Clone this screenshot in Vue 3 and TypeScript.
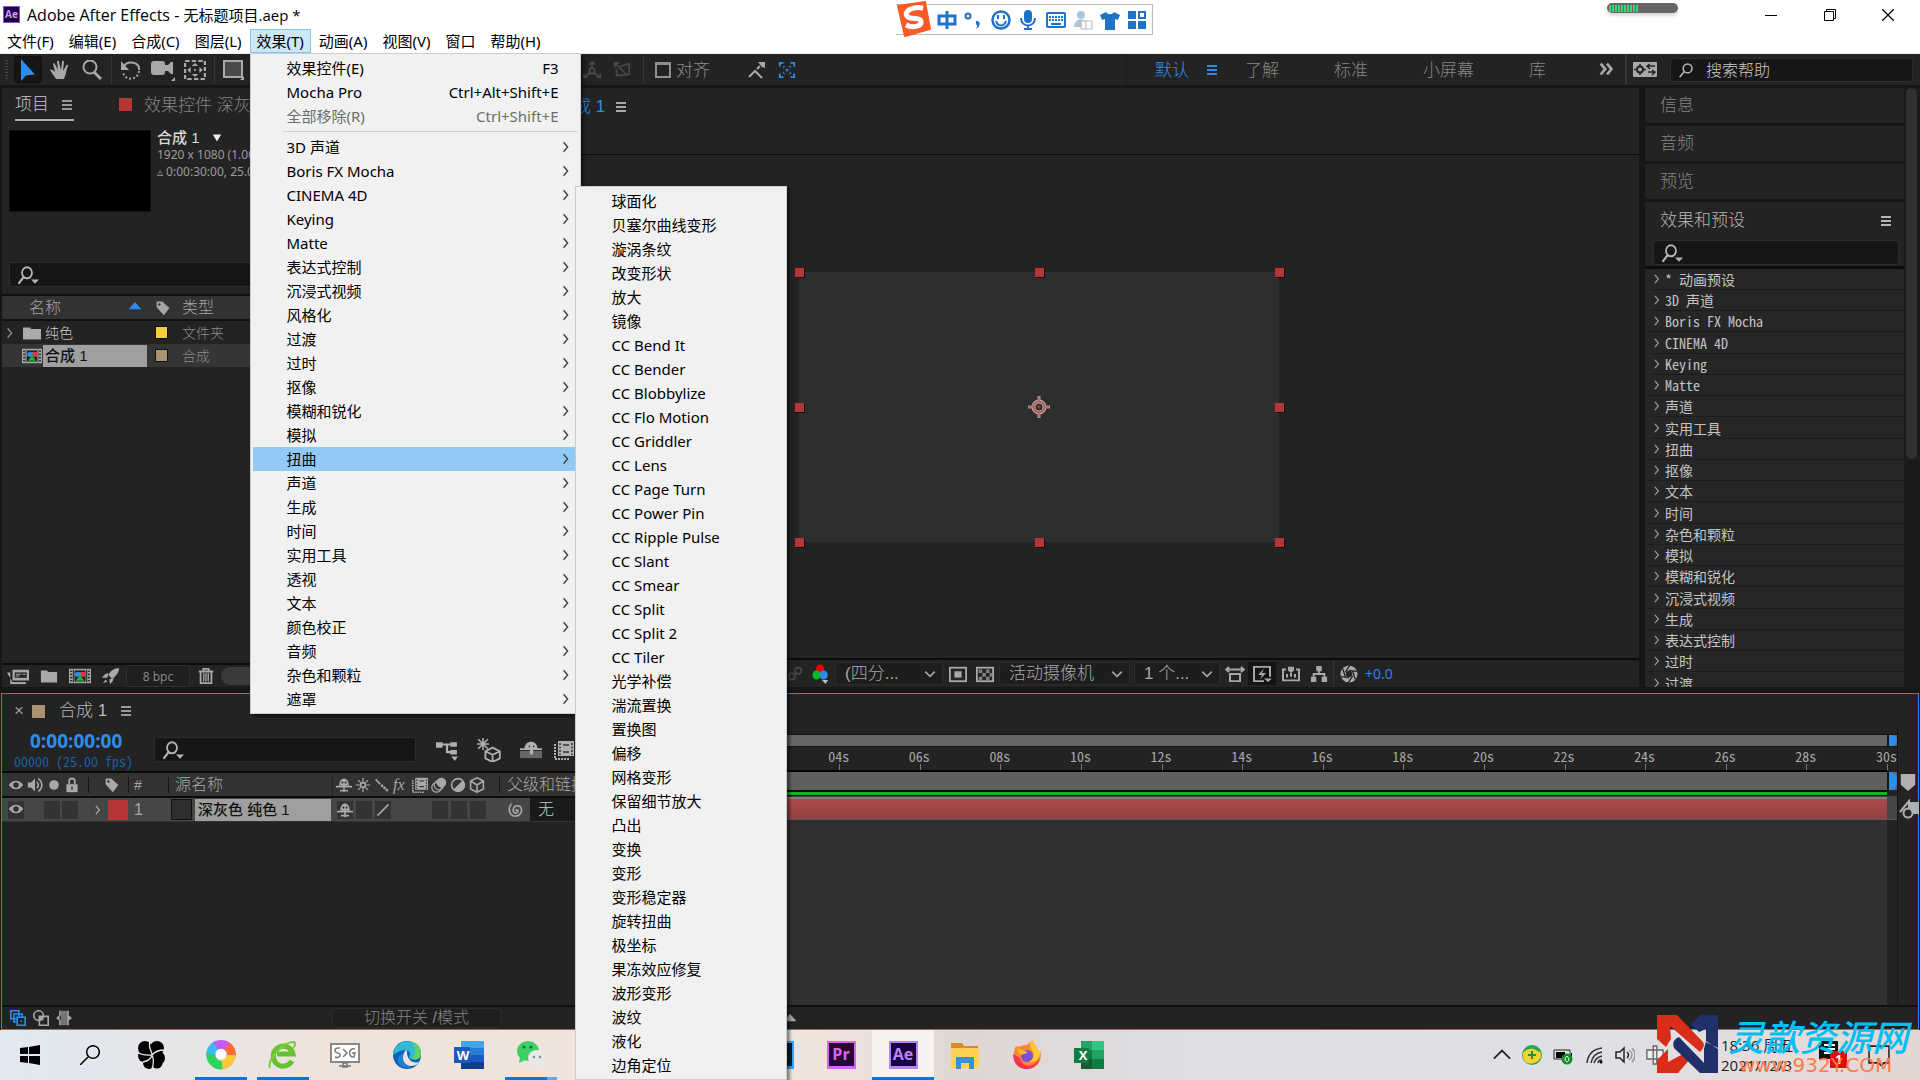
<script setup lang="ts">
import { h, ref } from 'vue'

const icons: Record<string, string> = {
  arrow: '<path d="M3 0v20l5-5 9-1z" fill="#2d8ceb"/>',
  hand: '<path d="M6 19C4 16 1 12 0 10c1-1 3 0 5 2L3 4c0-1 2-1 2 0l3 6-1-8c0-2 2-2 2 0l2 8 1-8c0-2 2-1 2 0l-1 9 3-5c1-2 3-1 2 0-2 4-2 9-4 13z" fill="currentColor"/>',
  zoom: '<circle cx="8" cy="7" r="6.5" fill="none" stroke="currentColor" stroke-width="2"/><path d="m12 12 7 7" stroke="currentColor" stroke-width="3"/>',
  rotate: '<path d="M3 6c4-6 16-4 15 4" fill="none" stroke="currentColor" stroke-width="2"/><path d="M18 11c-1 10-15 10-16 1" fill="none" stroke="currentColor" stroke-width="2" stroke-dasharray="2 2"/><path d="M0 1v9h8z" fill="currentColor"/>',
  camera: '<rect x="0" y="2" width="14" height="14" rx="3" fill="currentColor"/><path d="M13 6h4l3-3h2v12h-2l-3-3h-4zM20 22h4v-4z" fill="currentColor"/>',
  anchorTool: '<rect x="1" y="1" width="18" height="18" fill="none" stroke="currentColor" stroke-width="2" stroke-dasharray="4 2"/><path d="m10 3 3 3H7zM10 17l3-3H7zM3 10l3-3v6zM17 10l-3-3v6z" fill="currentColor"/><circle cx="10" cy="10" r="1" fill="currentColor"/>',
  rect: '<rect x="1" y="2" width="18" height="16" fill="#4a4a4a" stroke="currentColor" stroke-width="2"/><path d="M17 21h4v-4z" fill="currentColor"/>',
  axis: '<circle cx="10" cy="11" r="3" fill="none" stroke="currentColor" stroke-width="2"/><path d="M10 8V1M7 4l3-3 3 3M8 13l-7 5M1 14v4h4M12 13l7 5M19 14v4h-4" fill="none" stroke="currentColor" stroke-width="2"/>',
  axis2: '<path d="M2 2l14 14M2 7V2h5M8 6l10-3v12l-9 1H4V9" fill="none" stroke="currentColor" stroke-width="2"/>',
  snap: '<path d="M3 17l6-6 7 7M11 9l3-3" fill="none" stroke="currentColor" stroke-width="2"/><path d="M12 2h7v6l-3-1z" fill="currentColor"/>',
  snapBox: '<path d="M2 6V2h4M14 2h4v4M18 14v4h-4M6 18H2v-4" fill="none" stroke="currentColor" stroke-width="2"/><path d="M6 8V6h2m4 0h2v2m0 4v2h-2m-4 0H6v-2M9 9h2v2H9z" fill="none" stroke="currentColor"/>',
  lens: '<circle cx="12" cy="8" r="5.5" fill="none" stroke="currentColor" stroke-width="2"/><path d="m8 12-6 7" stroke="currentColor" stroke-width="2"/>',
  lensMenu: '<circle cx="10" cy="8" r="5" fill="none" stroke="currentColor" stroke-width="1.800"/><path d="m6.500 12-5 6" stroke="currentColor" stroke-width="2"/><path d="M14 14h8l-4 4z" fill="currentColor"/>',
  menu: '<path d="M0 5h10M0 9h10M0 13h10" stroke="currentColor" stroke-width="2" transform="translate(5 1)"/>',
  more: '<path d="m3 3 5 6-5 6M10 3l5 6-5 6" fill="none" stroke="currentColor" stroke-width="3"/>',
  panel: '<rect width="24" height="15" rx="1" fill="currentColor"/><circle cx="7" cy="7.500" r="3" fill="none" stroke="#232323" stroke-width="2"/><path d="M7 2v2M7 11v2M1 7.500h2M11 7.500h2M15 4h7M17 2l-3 2 3 3M15 10h7M19 8l3 2-3 3" fill="none" stroke="#232323" stroke-width="1.500"/>',
  tri: '<path d="M10 5 18 14H2z" fill="currentColor"/>',
  tridown: '<path d="M10 15 16 5H4z" fill="currentColor"/>',
  tag: '<path d="M2 2h7l9 8-7 9-9-10z" fill="currentColor"/><circle cx="5.500" cy="5.500" r="1.500" fill="#323232"/>',
  chev: '<path d="m7 4 5 6-5 6" fill="none" stroke="currentColor" stroke-width="1.800"/>',
  chevd: '<path d="m4 7 6 6 6-6" fill="none" stroke="currentColor" stroke-width="2"/>',
  folder: '<path d="M1 3h7l1 2h10v13H1z" fill="currentColor"/>',
  comp: '<path d="M0 1h20v18H0z" fill="currentColor"/><path d="M4 2v16M16 2v16" stroke="#333"/><path d="M1 4h2M1 8h2M1 12h2M1 16h2M17 4h2M17 8h2M17 12h2M17 16h2" stroke="#333" stroke-width="2"/><path d="M5 3h10v14H5z" fill="#222"/><path d="M9 5h6v6H9z" fill="#e33"/><circle cx="8" cy="8" r="3" fill="#38e"/><path d="m10 9 4 7H6z" fill="#1b3"/>',
  footage: '<path d="M5 3h15v12H5zM0 6h3v13h14v-2H5M1 6v13" fill="currentColor"/><path d="M7 6h11v6H7z" fill="#232323"/><path d="M8 8h5M8 10h3M14 8h3" stroke="currentColor"/><path d="M4 17h13v2H4z" fill="currentColor"/>',
  rocket: '<path d="M19 1c-6 0-10 4-12 8l4 4c4-2 8-7 8-12zM7 7c-3 0-5 2-7 5h6zM13 12c0 3-2 5-4 7l-1-5zM4 14l-3 4 5-2z" fill="currentColor"/>',
  trash: '<path d="M2 5h16M7 4V2h6v2M4 6v12h12V6" fill="none" stroke="currentColor" stroke-width="2"/><path d="M7.500 7v9M10 7v9M12.500 7v9" stroke="currentColor" stroke-width="1.500"/>',
  glass: '<circle cx="6" cy="13" r="4" fill="none" stroke="currentColor" stroke-width="2"/><circle cx="14" cy="6" r="4" fill="none" stroke="currentColor" stroke-width="2"/>',
  rgb: '<circle cx="9" cy="5" r="4.500" fill="#e00"/><circle cx="5" cy="11" r="4.500" fill="#0b2"/><circle cx="13" cy="11" r="4.500" fill="#2d8ceb"/><path d="M11 16h7l-3 4z" fill="#bbb"/>',
  mask: '<rect x="1" y="3" width="18" height="15" fill="none" stroke="currentColor" stroke-width="2"/><path d="M6 7h8v7H6z" fill="currentColor"/>',
  checker: '<rect x="1" y="3" width="18" height="15" fill="none" stroke="currentColor" stroke-width="2"/><path d="M3 5h4v4H3zM11 5h4v4h-4zM7 9h4v4H7zM15 9h3v4h-3zM3 13h4v4H3zM11 13h4v4h-4z" fill="currentColor" opacity=".7"/>',
  aspect: '<path d="M1 5h18M4 2 1 5l3 3M16 2l3 3-3 3M5 10h10v8H5z" fill="none" stroke="currentColor" stroke-width="2"/>',
  fast: '<path d="M12 18H2V2h16v11" fill="none" stroke="currentColor" stroke-width="2"/><path d="m12 4-6 7h4l-2 5 6-7h-4zM12 15h8l-4 4z" fill="currentColor"/>',
  ruler: '<path d="M5 5H2v12h16V5h-3M10 13V9M6 14v-4M14 14v-4" fill="none" stroke="currentColor" stroke-width="2"/><path d="M7 2h6v4l-3 3-3-3z" fill="currentColor"/>',
  flow: '<path d="M7 1h6v6H7zM1 13h6v6H1zM13 13h6v6h-6z" fill="currentColor"/><path d="M10 6v4M4 14v-4h12v4" fill="none" stroke="currentColor" stroke-width="2"/>',
  shutter: '<circle cx="10" cy="10" r="6.500" fill="none" stroke="currentColor" stroke-width="6"/><path d="m11 0-5 8M19 7l-9-1M17 16l-3-9M9 20l5-8M1 13l9 1M3 4l3 9" stroke="#232323" stroke-width="1.500"/>',
  eye: '<path d="M1 10c5-7 13-7 18 0-5 7-13 7-18 0z" fill="currentColor"/><circle cx="10" cy="10" r="3.500" fill="#323232"/>',
  speaker: '<path d="M1 7h4l5-5v16l-5-5H1z" fill="currentColor"/><path d="M12 6c3 2 3 6 0 8M14 2c6 4 6 12 0 16" fill="none" stroke="currentColor" stroke-width="2"/>',
  dot: '<circle cx="10" cy="10" r="6" fill="currentColor"/>',
  lock: '<path d="M6 9V5c0-4 8-4 8 0v4" fill="none" stroke="currentColor" stroke-width="2.500"/><path d="M2 9h16v10H2z" fill="currentColor"/><path d="M10 12v4" stroke="#323232" stroke-width="2"/>',
  shy: '<path d="M4 11c0-12 12-12 12 0z" fill="currentColor"/><path d="M0 12h20M10 9v10M5 17h10" stroke="currentColor" stroke-width="2"/><circle cx="8" cy="7" r="1.300" fill="#323232"/><circle cx="12" cy="7" r="1.300" fill="#323232"/>',
  sun: '<circle cx="10" cy="10" r="3" fill="none" stroke="currentColor" stroke-width="2"/><path d="M10 1v5M10 14v5M1 10h5M14 10h5M4 4l3 3M13 13l3 3M16 4l-3 3M7 13l-3 3" stroke="currentColor" stroke-width="1.500"/>',
  quality: '<path d="M2 3l6 6" stroke="currentColor" stroke-width="2"/><path d="m9 10 9 8" stroke="currentColor" stroke-width="3" stroke-dasharray="3 1"/>',
  slash: '<path d="M3 17 17 3" stroke="currentColor" stroke-width="2"/>',
  film: '<path d="M4 1h16v15H4z" fill="currentColor"/><path d="M1 4v15h15" fill="none" stroke="currentColor" stroke-width="2" stroke-dasharray="2 1"/><path d="M6 3v12M18 3v12" stroke="#323232" stroke-width="1.500" stroke-dasharray="2 1.500"/><path d="M9 5h6M9 12h6" stroke="#323232" stroke-width="1.500"/>',
  blur: '<circle cx="13" cy="7" r="6" fill="currentColor"/><circle cx="10" cy="10" r="6" fill="none" stroke="currentColor" stroke-width="1.500"/><circle cx="7" cy="13" r="6" fill="none" stroke="currentColor" stroke-width="1.500"/>',
  adjust: '<circle cx="10" cy="10" r="8" fill="none" stroke="currentColor" stroke-width="2"/><path d="M16 4A8 8 0 0 1 4 16z" fill="currentColor"/>',
  cube: '<path d="m10 1 8 4v10l-8 4-8-4V5zM2 5l8 5 8-5M10 10v9" fill="none" stroke="currentColor" stroke-width="2"/>',
  mini: '<path d="M0 3h6v5H0zM13 3h6v4h-6zM13 10h6v4h-6zM14 16h6l-3 4z" fill="currentColor"/><path d="M5 5h8M10 5v7h4" fill="none" stroke="currentColor" stroke-width="2"/>',
  draft: '<path d="m13 8 6 3v6l-6 3-6-3v-6zM7 11l6 3 6-3M13 14v6" fill="none" stroke="currentColor" stroke-width="1.500"/><path d="M5 0v10M0 5h10M1 1l8 8M9 1 1 9" stroke="currentColor" stroke-width="1.300"/>',
  shyBar: '<path d="M0 11h20v8H0z" fill="#666"/><path d="M4 9c0-11 12-11 12 0zM0 8h20v2H0zM9 8h3v7H9z" fill="currentColor"/><path d="M8 6h1M12 6h1" stroke="#222" stroke-width="2"/>',
  spiral: '<path d="M10 11c0-2 3-1 2 1-2 3-6 1-5-3 1-5 8-5 9 0 1 6-5 9-10 7C1 13 2 6 5 3" fill="none" stroke="currentColor" stroke-width="1.800"/>',
  layers: '<path d="M1 1h10v10H1zM5 5h10v10H5z" fill="none" stroke="currentColor" stroke-width="2"/><path d="M9 9h10v10H9z" fill="#232323" stroke="currentColor" stroke-width="2"/><path d="M13 13h2v2h-2z" fill="currentColor"/>',
  blend: '<circle cx="7" cy="7" r="6" fill="none" stroke="currentColor" stroke-width="2"/><path d="M8 8h11v11H8z" fill="none" stroke="currentColor" stroke-width="2"/><path d="M8 8h5v5H8z" fill="currentColor"/>',
  braces: '<path d="M6 1v5l-2 4 2 4v5H4v-6l-4-3 4-3V1zM14 1h2v6l4 3-4 3v6h-2z" fill="currentColor"/><path d="M6 1h8v18H6z" fill="currentColor" opacity=".6"/>',
  marker: '<path d="M2 1h16v12l-8 7-8-7z" fill="currentColor"/>',
  compBtn: '<path d="M10 3h10v12H10z" fill="currentColor"/><path d="M1 13 10 2v8" fill="none" stroke="currentColor" stroke-width="2"/><circle cx="9" cy="14" r="4.500" fill="#232323" stroke="currentColor" stroke-width="2"/>',
  anchor: '<path d="M11 0v7M11 15v7M0 11h7M15 11h7" stroke="#999" stroke-width="3"/><circle cx="11" cy="11" r="5.500" fill="none" stroke="#aaa" stroke-width="4"/><circle cx="11" cy="11" r="5.500" fill="none" stroke="#c44" stroke-width="1.500"/><path d="M11 1v5M11 16v5M1 11h5M16 11h5" stroke="#c44"/><circle cx="11" cy="11" r="1.500" fill="#a33"/>',
  sogou: '<path d="M2 5 29 1l5 27-25 7z" fill="#f95a28" stroke="#f95a28" stroke-width="2" stroke-linejoin="round"/><path d="M27 7C16 5 6 11 12 16c4 3 12 0 13 4 1 6-9 7-15 4" fill="none" stroke="#fff" stroke-width="5"/>',
  zhong: '<path d="M2 6h16v8H2zM10 1v18" fill="none" stroke="currentColor" stroke-width="3"/>',
  punct: '<circle cx="4" cy="6" r="2.500" fill="none" stroke="currentColor" stroke-width="2"/><path d="M12 11c5-1 5 5 0 8 2-3 1-4 0-5z" fill="currentColor"/>',
  smile: '<circle cx="10" cy="10" r="8.500" fill="none" stroke="currentColor" stroke-width="2.500"/><path d="M7 5v4M13 5v4" stroke="currentColor" stroke-width="2"/><path d="M5 11c2 6 8 6 10 0" fill="none" stroke="currentColor" stroke-width="2"/>',
  mic: '<rect x="6" y="0" width="8" height="13" rx="4" fill="currentColor"/><path d="M3 8c0 10 14 10 14 0M10 15v4M6 19h8" fill="none" stroke="currentColor" stroke-width="2"/>',
  keyboard: '<rect x="1" y="3" width="18" height="14" rx="1" fill="none" stroke="currentColor" stroke-width="2"/><path d="M3 7h14M3 10h14" stroke="currentColor" stroke-width="2" stroke-dasharray="2 1"/><path d="M5 14h10" stroke="currentColor" stroke-width="2"/>',
  person: '<circle cx="8" cy="5" r="4" fill="#adc4d8"/><path d="M1 17c0-10 13-10 13 0z" fill="#adc4d8"/><path d="M8 11h11v8H8zM13 11v8" fill="#fff" stroke="#b5b5b5"/>',
  shirt: '<path d="m6 2-6 3 2 5 3-1v11h10V9l3 1 2-5-6-3c-2 3-6 3-8 0z" fill="currentColor"/>',
  grid: '<path d="M1 1h8v8H1zM1 11h8v8H1zM11 11h8v8h-8z" fill="currentColor"/><path d="M12 2h6v6h-6z" fill="none" stroke="currentColor" stroke-width="2"/>',
  win: '<path d="m0 3 8-1v7H0zM9 2l11-2v9H9zM0 11h8v7l-8-1zM9 11h11v9L9 18z" fill="#000"/>',
  wsearch: '<circle cx="13" cy="7" r="6.300" fill="none" stroke="#000" stroke-width="1.500"/><path d="m8 12-8 8" stroke="#000" stroke-width="1.500"/>',
  petals: '<g fill="#000"><circle cx="8" cy="7" r="7"/><circle cx="20" cy="7" r="7"/><circle cx="7" cy="15" r="6"/><circle cx="21" cy="17" r="7"/><circle cx="12" cy="22" r="6"/><circle cx="20" cy="22" r="5.500"/><path d="M8 8h12v12H8z"/></g><path d="M13 0c-2 6 1 9 2 13M0 11c6 4 9 3 15 3M28 9c-6 0-10 1-13 5M15 14c-1 4-4 6-9 7M15 14c2 4 2 8 0 14" fill="none" stroke="#e8e6ea" stroke-width="1.300"/>',
  wheel: '<g fill="none" stroke-width="9"><path d="M5 16A10 10 0 0 1 11 5" stroke="#41b5f5"/><path d="M10 6A10 10 0 0 1 22 7" stroke="#c05af0"/><path d="M21 6A10 10 0 0 1 25 17" stroke="#fb6a3c"/><path d="M25 15A10 10 0 0 1 15 25" stroke="#fcc838"/><path d="M16 25A10 10 0 0 1 5 14" stroke="#2dd35b"/></g><circle cx="15" cy="14" r="5" fill="#fff"/>',
  ie: '<path d="M24 21A10 10 0 1 1 25 14H9" fill="none" stroke="#66c22e" stroke-width="5"/><path d="M2 28C-1 20 14 2 26 2c2 1 1 4-1 6" fill="none" stroke="#78cf3e" stroke-width="2"/>',
  sg: '<path d="M1 4h28v18H1z" fill="#fff" stroke="#888" stroke-width="2"/><path d="M10 8c-7-1-6 5-2 5 4 1 2 6-3 4M13 9l4 4-4 4M25 9c-7-2-7 9-1 8l1-4h-3M13 23h4v4h-4zM9 26h12" fill="none" stroke="#777" stroke-width="1.500"/>',
  edge: '<circle cx="15" cy="15" r="14" fill="#0b62b8"/><path d="M1 15C2-3 29-3 29 13c0 8-10 8-12 4 4-5-3-12-16-2z" fill="#32b9d4"/><path d="M19 2c7 2 10 7 10 11 0 7-6 7-10 6 6-4 5-13 0-17z" fill="#62d35c"/><path d="M15 10c-8 4-6 15 4 16 3 0 6-1 8-4-6 2-13-2-12-12z" fill="#efe3dc"/><path d="M13 12c-5 6 0 15 8 15-8 4-19-3-14-11z" fill="#1b82d4"/>',
  word: '<path d="M7 1h23v28H7z" fill="#185abd"/><path d="M7 1h23v7H7z" fill="#41a5ee"/><path d="M7 8h23v7H7z" fill="#2b7cd3"/><path d="M7 22h23v7H7z" fill="#103f91"/><rect x="0" y="7" width="16" height="16" fill="#185abd"/>',
  wechat: '<ellipse cx="12" cy="11" rx="11" ry="10" fill="#3fcf68"/><path d="m4 17-1 6 6-3z" fill="#3fcf68"/><ellipse cx="21" cy="18" rx="9" ry="8" fill="#e9e9e9"/><path d="m24 24 4 4v-6z" fill="#e9e9e9"/><g fill="#1d6b35"><circle cx="8" cy="7" r="1.500"/><circle cx="15" cy="7" r="1.500"/></g><g fill="#888"><circle cx="18" cy="17" r="1.200"/><circle cx="24" cy="17" r="1.200"/></g>',
  explorer: '<path d="M1 3h11l2 3h14v22H1z" fill="#d98b2b"/><path d="M1 8h28v20H1z" fill="#fcd253"/><path d="M6 29V17h18v12h-5v-6h-8v6z" fill="#3b8fd9"/>',
  firefox: '<path d="M4 6C0 13 0 29 15 29c11 0 16-10 13-18-3 0-3-5-8-11-2 3-4 4-6 5C8 5 8 8 4 6z" fill="#fb8a2e"/><path d="M1 14c0 19 23 20 27 4-6 10-18 10-20 0z" fill="#f5335a"/><circle cx="15" cy="16" r="6" fill="#7b4fd8"/><path d="M20 0c-4 4-1 9 1 12 2 5-1 8-4 10 8 0 12-5 11-11-3 0-4-6-8-11z" fill="#fdc934"/><path d="M5 8c4 2 8 2 11 5-3 0-5 2-8 2z" fill="#fdb52e"/>',
  excel: '<path d="M7 1h23v28H7z" fill="#21a366"/><path d="M18 1h12v9H18z" fill="#33c481"/><path d="M7 10h11v9H7z" fill="#107c41"/><path d="M7 19h23v10H7z" fill="#185c37"/><path d="M18 19h12v10H18z" fill="#107c41"/><rect x="0" y="8" width="15" height="15" fill="#107c41"/>',
  up: '<path d="m1 14 9-9 9 9" fill="none" stroke="#222" stroke-width="2"/>',
  guard: '<circle cx="10" cy="10" r="10" fill="#2fa350"/><path d="M1 8c3-4 10-6 14-2 4 0 4 3 4 6-2 5-10 9-15 5-3-2-3-5-3-9z" fill="#f9d32f"/><path d="M10 6v8M6 10h8" stroke="#1e8b42" stroke-width="2"/>',
  battery: '<path d="M1 5h16v9H1z" fill="none" stroke="#222"/><path d="M3 7h9v6H3zM18 8h1v4h-1z" fill="#000"/><circle cx="14" cy="14" r="5.500" fill="#0d9020"/><path d="M14 11c-3 3-2 5 0 6 2-1 3-3 0-6z" fill="none" stroke="#fff"/>',
  wifi: '<g fill="none" stroke="#333" stroke-width="1.500"><path d="M3 18C4 9 10 4 18 3M7 18c1-6 5-10 11-11M10 18c1-4 4-6 8-7M14 18c0-2 2-3 4-3"/></g><circle cx="17" cy="17" r="1.500"/>',
  sound: '<path d="M1 7h4l4-4v14l-4-4H1zM12 7c2 2 2 4 0 6" fill="none" stroke="#222" stroke-width="1.500"/><path d="M14 5c4 3 4 7 0 10M17 3c4 4 4 10 0 14" fill="none" stroke="#999" stroke-width="1.500"/>',
  zhongTray: '<path d="M1 5h18v9H1zM8 1h4v18H8z" fill="#eee" stroke="#666" stroke-width="1.500"/>',
  news: '<path d="M2 0h17v18H2zM0 4h2v14H0z" fill="#111"/><path d="M5 4h11M5 8h11M5 12h6" stroke="#fff" stroke-width="2"/><path d="M11 10h17v17H11z" fill="#e60b0b"/>',
  bubble: '<path d="M1 2h19v16h-5l-2 3-3-3H1z" fill="none" stroke="#222" stroke-width="1.500"/>',
  brand: '<path d="M0 0h20l25 26c4 4 1 8-2 11L13 11l1 13-5 8L0 24zM0 58V45l11-11v13L28 38l6 5-13 15z" fill="#d92d1a"/><path d="M61 0H43l-9 9 8 8 7-3v13l12 6zM61 58H43L17 33c-2-5 0-9 5-11l25 26V34l2-8 12 8z" fill="#20306b"/>',
}

interface IcoProps { n: string; w?: number; t?: number; box?: string }
const Ico = (p: IcoProps) =>
  h('svg', {
    width: p.w ?? 18,
    height: p.t ?? p.w ?? 18,
    viewBox: p.box ?? '0 0 20 20',
    preserveAspectRatio: 'none',
    'aria-hidden': 'true',
    innerHTML: icons[p.n],
  })

const menus = ['文件(F)', '编辑(E)', '合成(C)', '图层(L)', '效果(T)', '动画(A)', '视图(V)', '窗口', '帮助(H)']
const commands = [
  { name: '效果控件(E)', key: 'F3', off: false },
  { name: 'Mocha Pro', key: 'Ctrl+Alt+Shift+E', off: false },
  { name: '全部移除(R)', key: 'Ctrl+Shift+E', off: true },
]
const groups = ['3D 声道', 'Boris FX Mocha', 'CINEMA 4D', 'Keying', 'Matte', '表达式控制', '沉浸式视频', '风格化', '过渡', '过时', '抠像', '模糊和锐化', '模拟', '扭曲', '声道', '生成', '时间', '实用工具', '透视', '文本', '颜色校正', '音频', '杂色和颗粒', '遮罩']
const distort = ['球面化', '贝塞尔曲线变形', '漩涡条纹', '改变形状', '放大', '镜像', 'CC Bend It', 'CC Bender', 'CC Blobbylize', 'CC Flo Motion', 'CC Griddler', 'CC Lens', 'CC Page Turn', 'CC Power Pin', 'CC Ripple Pulse', 'CC Slant', 'CC Smear', 'CC Split', 'CC Split 2', 'CC Tiler', '光学补偿', '湍流置换', '置换图', '偏移', '网格变形', '保留细节放大', '凸出', '变换', '变形', '变形稳定器', '旋转扭曲', '极坐标', '果冻效应修复', '波形变形', '波纹', '液化', '边角定位']
const presets = ['* 动画预设', '3D 声道', 'Boris FX Mocha', 'CINEMA 4D', 'Keying', 'Matte', '声道', '实用工具', '扭曲', '抠像', '文本', '时间', '杂色和颗粒', '模拟', '模糊和锐化', '沉浸式视频', '生成', '表达式控制', '过时', '过渡']
const openMenu = ref('效果(T)')
const openGroup = ref('扭曲')
const seconds = Array.from({ length: 16 }, (_, i) => String(i * 2).padStart(2, '0') + 's')
const ime = ['zhong', 'punct', 'smile', 'mic', 'keyboard', 'person', 'shirt', 'grid']
const switches = ['shy', 'sun', 'quality', 'fx', 'film', 'blur', 'adjust', 'cube']
const apps = [
  { n: 'wheel', state: 'run' }, { n: 'ie', state: 'run' }, { n: 'sg', state: '' }, { n: 'edge', state: '' },
  { n: 'word', state: '', t: 'W' }, { n: 'wechat', state: 'run multi' },
]
const apps2 = [
  { n: 'ps', state: '', t: 'Ps' }, { n: 'pr', state: '', t: 'Pr' }, { n: 'ae', state: 'run active', t: 'Ae' },
  { n: 'explorer', state: '' }, { n: 'firefox', state: '' }, { n: 'excel', state: '', t: 'X' },
]
</script>

<template>
  <div class="desktop">
    <header class="titlebar">
      <span class="ae-mini">Ae</span>
      <h1>Adobe After Effects - <span>无标题项目.aep *</span></h1>
      <div class="ime">
        <Ico class="sogou" n="sogou" :w="36" :t="36" box="0 0 36 36" />
        <Ico v-for="i in ime" :key="i" :n="i" :w="20" />
      </div>
      <div class="win-ctl">
        <span class="capsule"><i></i></span>
        <button aria-label="最小化"><svg width="12" height="12"><path d="M0 6.500h12" stroke="#000" /></svg></button>
        <button aria-label="还原"><svg width="12" height="12"><path d="M.5 2.500h9v9h-9zM2.500 2V.5h9v9H10" fill="none" stroke="#000" /></svg></button>
        <button aria-label="关闭"><svg width="12" height="12"><path d="m0 0 12 12M12 0 0 12" stroke="#000" stroke-width="1.300" /></svg></button>
      </div>
    </header>

    <nav class="menubar">
      <div v-for="m in menus" :key="m" class="menu-slot">
        <button class="menu-btn" :class="{ open: m === openMenu }" @click="openMenu = m">{{ m }}</button>
        <div v-if="m === '效果(T)' && openMenu === m" class="menu effects">
          <button v-for="c in commands" :key="c.name" class="mi" :disabled="c.off"><span>{{ c.name }}</span><kbd>{{ c.key }}</kbd></button>
          <hr />
          <button v-for="g in groups" :key="g" class="mi" :class="{ on: g === openGroup }" @click="openGroup = g">
            <span>{{ g }}</span><Ico class="sub-ar" n="chev" :w="16" />
          </button>
          <div v-if="openGroup === '扭曲'" class="menu distort">
            <button v-for="d in distort" :key="d" class="mi">{{ d }}</button>
          </div>
        </div>
      </div>
    </nav>

    <div class="toolbar">
      <span class="grip"></span>
      <button class="tool sel" aria-label="选取"><Ico n="arrow" :w="20" :t="22" /></button>
      <button class="tool" aria-label="手形"><Ico n="hand" :w="20" /></button>
      <button class="tool" aria-label="缩放"><Ico n="zoom" :w="20" /></button>
      <i class="vsep"></i>
      <button class="tool" aria-label="旋转"><Ico n="rotate" :w="20" /></button>
      <button class="tool" aria-label="摄像机"><Ico n="camera" :w="24" :t="22" box="0 0 24 22" /></button>
      <button class="tool" aria-label="锚点"><Ico n="anchorTool" :w="22" :t="20" /></button>
      <i class="vsep"></i>
      <button class="tool" aria-label="矩形"><Ico n="rect" :w="22" :t="22" box="0 0 22 22" /></button>
      <div class="tools2">
        <Ico class="faint" n="axis" :w="18" /><Ico class="faint" n="axis2" :w="18" />
        <i class="vsep"></i>
        <label class="snap"><input type="checkbox" /><span>对齐</span></label>
        <Ico n="snap" :w="20" /><Ico class="blue" n="snapBox" :w="18" />
      </div>
      <div class="spaces">
        <button class="ws blue">默认</button>
        <Ico class="blue ws-menu" n="menu" :w="20" />
        <button class="ws">了解</button><button class="ws">标准</button><button class="ws">小屏幕</button><button class="ws">库</button>
        <Ico class="ws-more" n="more" :w="18" />
        <i class="vsep tall"></i>
        <Ico n="panel" :w="24" :t="15" box="0 0 24 15" />
        <label class="field help"><Ico n="lens" :w="16" /><input type="text" placeholder="搜索帮助" aria-label="搜索帮助" /></label>
      </div>
    </div>

    <main class="work">
      <div class="upper">
        <section class="panel project">
          <div class="tabs">
            <span class="tab cur">项目 <Ico n="menu" :w="20" /></span>
            <span class="chip red"></span><span class="tab">效果控件 深灰色</span>
          </div>
          <div class="info">
            <div class="thumb"></div>
            <div>
              <p class="nm">合成 1 <Ico class="white" n="tridown" :w="14" /></p>
              <p class="meta">1920 x 1080 (1.00)</p>
              <p class="meta">▵ 0:00:30:00, 25.00 fps</p>
            </div>
          </div>
          <label class="field find"><Ico n="lensMenu" :w="22" box="0 0 22 20" /><input type="text" aria-label="搜索项目" /></label>
          <table class="items">
            <thead>
              <tr><th class="c1"><span>名称</span><Ico class="blue" n="tri" :w="16" /></th><th class="c2"><Ico n="tag" :w="16" /></th><th>类型</th></tr>
            </thead>
            <tbody>
              <tr>
                <td class="c1"><Ico class="tw" n="chev" :w="16" /><Ico class="kind" n="folder" :w="20" :t="16" /><span class="lbl">纯色</span></td>
                <td class="c2"><i class="sw yellow"></i></td><td>文件夹</td>
              </tr>
              <tr class="on">
                <td class="c1"><i class="tw"></i><Ico class="kind" n="comp" :w="20" :t="16" /><span class="lbl hot">合成 1</span></td>
                <td class="c2"><i class="sw tan"></i></td><td>合成</td>
              </tr>
            </tbody>
          </table>
          <div class="foot pfoot">
            <span><Ico n="footage" :w="22" :t="18" /></span><span><Ico n="folder" :w="18" :t="16" /></span><span><Ico n="comp" :w="22" :t="16" /></span><span><Ico n="rocket" :w="18" /></span>
            <button class="bpc">8 bpc</button><Ico n="trash" :w="18" /><i class="hscroll"></i>
          </div>
        </section>

        <section class="panel viewer">
          <div class="vtab"><span class="blue">合成 1</span><Ico n="menu" :w="20" /></div>
          <div class="stage">
            <div class="canvas">
              <i v-for="k in 9" :key="k" :class="k === 5 ? 'mid' : 'hd'"><Ico v-if="k === 5" n="anchor" :w="22" box="0 0 22 22" /></i>
            </div>
          </div>
          <div class="foot vfoot">
            <Ico class="faint" n="glass" :w="16" />
            <Ico n="rgb" :w="18" :t="20" />
            <span class="pick w1"><select aria-label="分辨率"><option>(四分...</option></select><Ico n="chevd" :w="16" /></span>
            <Ico n="mask" :w="18" /><Ico n="checker" :w="18" />
            <span class="pick w2"><select aria-label="视图"><option>活动摄像机</option></select><Ico n="chevd" :w="16" /></span>
            <span class="pick w3"><select aria-label="布局"><option>1 个...</option></select><Ico n="chevd" :w="16" /></span>
            <Ico n="aspect" :w="20" :t="18" /><span class="pressed"><Ico n="fast" :w="20" :t="18" /></span><Ico n="ruler" :w="20" :t="18" /><Ico n="flow" :w="18" />
            <i class="vsep"></i><Ico n="shutter" :w="18" /><span class="blue exp">+0.0</span>
          </div>
        </section>

        <aside class="side">
          <div class="stack">
            <h2>信息</h2><h2>音频</h2><h2>预览</h2>
            <section class="fx">
              <h2 class="lit">效果和预设 <Ico n="menu" :w="20" /></h2>
              <label class="field fxfind"><Ico n="lensMenu" :w="22" box="0 0 22 20" /><input type="text" aria-label="搜索效果" /></label>
              <ul><li v-for="p in presets" :key="p"><Ico n="chev" :w="14" />{{ p }}</li></ul>
            </section>
          </div>
          <div class="vscroll"><i></i></div>
        </aside>
      </div>

      <section class="timeline">
        <div class="ttab"><button aria-label="关闭合成">×</button><span class="chip tan"></span><span>合成 1</span><Ico n="menu" :w="20" /></div>
        <div class="tbody">
          <div class="tleft">
            <div class="tctl">
              <div class="tc"><b>0:00:00:00</b><small>00000 (25.00 fps)</small></div>
              <label class="field tfind"><Ico n="lensMenu" :w="22" box="0 0 22 20" /><input type="text" aria-label="搜索图层" /></label>
              <Ico n="mini" :w="22" /><Ico n="draft" :w="24" :t="24" /><Ico n="shyBar" :w="22" :t="18" /><Ico n="film" :w="20" />
            </div>
            <div class="thead">
              <div class="av"><Ico n="eye" :w="16" /><Ico n="speaker" :w="16" /><Ico n="dot" :w="16" /><Ico n="lock" :w="14" :t="16" /></div>
              <div class="lab"><Ico n="tag" :w="16" /></div>
              <div class="no">#</div>
              <div class="src">源名称</div>
              <div class="sws"><template v-for="s in switches" :key="s"><em v-if="s === 'fx'">fx</em><Ico v-else :n="s" :w="16" /></template></div>
              <div class="par">父级和链接</div>
            </div>
            <div class="layer">
              <div class="av"><i class="cell"><Ico n="eye" :w="16" /></i><i></i><i class="cell"></i><i class="cell"></i></div>
              <div class="lab"><Ico n="chev" :w="14" /><i class="col"></i></div>
              <div class="no">1</div>
              <div class="src"><i class="solid"></i><span class="hot">深灰色 纯色 1</span></div>
              <div class="sws"><i class="cell"><Ico n="shy" :w="16" /></i><i class="cell"></i><i class="cell"><Ico n="slash" :w="16" /></i><i></i><i></i><i class="cell"></i><i class="cell"></i><i class="cell"></i></div>
              <div class="par"><Ico n="spiral" :w="18" /><span class="none">无</span></div>
            </div>
          </div>
          <div class="tright">
            <div class="nav"><i></i></div>
            <div class="ruler"><span v-for="s in seconds" :key="s"><b>{{ s }}</b></span></div>
            <div class="area"><i></i></div>
            <div class="cache"></div>
            <div class="lrow"><div class="bar"></div></div>
            <div class="rest"></div>
          </div>
          <div class="tend"><Ico n="marker" :w="18" /><Ico n="compBtn" :w="20" /></div>
        </div>
        <div class="tfoot">
          <Ico class="blue" n="layers" :w="16" /><Ico n="blend" :w="16" /><Ico n="braces" :w="16" />
          <button class="toggle">切换开关 /模式</button>
          <Ico class="zoomtri" n="tri" :w="16" />
        </div>
      </section>
    </main>

    <footer class="taskbar">
      <button class="start" aria-label="开始"><Ico n="win" :w="20" /></button>
      <button class="start" aria-label="搜索"><Ico n="wsearch" :w="20" /></button>
      <button class="app first" aria-label="助手"><Ico n="petals" :w="28" box="0 0 28 28" /></button>
      <button v-for="a in apps" :key="a.n" class="app" :class="a.state" :aria-label="a.n"><Ico :n="a.n" :w="30" box="0 0 30 30" /><b v-if="a.t" class="off">{{ a.t }}</b></button>
      <div class="apps2">
        <button v-for="a in apps2" :key="a.n" class="app" :class="a.state" :aria-label="a.n">
          <span v-if="['ps', 'pr', 'ae'].includes(a.n)" class="adobe" :class="a.n">{{ a.t }}</span>
          <template v-else><Ico :n="a.n" :w="30" box="0 0 30 30" /><b v-if="a.t" class="off">{{ a.t }}</b></template>
        </button>
      </div>
      <div class="tray">
        <Ico n="up" :w="18" /><Ico n="guard" :w="20" /><Ico n="battery" :w="20" /><Ico n="wifi" :w="20" /><Ico n="sound" :w="20" /><Ico n="zhongTray" :w="18" :t="20" />
        <div class="clock"><span>18:36 周五</span><span>2021/12/3</span></div>
        <span class="news"><Ico n="news" :w="28" box="0 0 28 28" /><b>1</b></span>
        <Ico n="bubble" :w="22" box="0 0 21 21" />
      </div>
    </footer>

    <div class="mark">
      <Ico n="brand" :w="61" :t="58" box="0 0 61 58" />
      <div><strong>灵歆资源网</strong><span>www.932Y.COM</span></div>
    </div>
  </div>
</template>

<style>
body { margin: 0; background: #161616; }
</style>

<style scoped>
* { box-sizing: border-box; }
svg { flex: none; display: block; }
button { font: inherit; color: inherit; background: none; border: 0; padding: 0; margin: 0; text-align: left; white-space: nowrap; }
input, select { font: inherit; color: inherit; background: none; border: 0; padding: 0; margin: 0; outline: 0; min-width: 0; }
i { font-style: normal; flex: none; }
p, h1, h2, ul { margin: 0; padding: 0; font-weight: 400; list-style: none; }
.desktop { position: relative; display: flex; flex-direction: column; height: 100vh; min-height: 1080px; overflow: hidden; color: #a8a8a8; font: 300 17px/20px "Liberation Sans", "Noto Sans CJK SC", sans-serif; }
.blue { color: #2d8ceb; }
.faint { color: #484848; }
.white { color: #eee; }
.vsep { width: 1px; height: 26px; background: #363636; }

.titlebar { display: flex; align-items: center; height: 29px; background: #fff; color: #000; padding-left: 3px; position: relative; }
.titlebar h1 { font: 400 16px/24px "Open Sans", "Noto Sans CJK SC", sans-serif; margin-left: 7px; }
.titlebar h1 span { font-size: 15px; }
.ae-mini { width: 17px; height: 17px; background: #1f0440; border: 1px solid #8a55c8; color: #c99bff; font: 700 10px/14px "Open Sans", sans-serif; text-align: center; }
.ime { position: absolute; left: 896px; top: 4px; width: 257px; height: 31px; display: flex; align-items: center; justify-content: space-between; padding: 0 5px 0 41px; color: #1f72c8; z-index: 3; border: 1px solid #bbb; border-left: 0; background: #fff; }
.sogou { position: absolute; left: 0; top: -4px; }
.win-ctl { margin-left: auto; display: flex; align-items: center; }
.win-ctl button { width: 59px; height: 28px; display: flex; justify-content: center; align-items: center; }
.win-ctl button:last-child { width: 61px; padding-right: 4px; }
.capsule { width: 71px; height: 10px; border-radius: 5px; background: #666; align-self: flex-start; margin: 2px 63px 0 0; box-shadow: 0 3px 3px #ddd; padding: 2px 2px; }
.capsule i { display: block; width: 29px; height: 7px; background: repeating-linear-gradient(90deg, #3fd67a 0 2px, #666 2px 3px); }

.menubar { display: flex; gap: 1px; height: 25px; background: #fff; border-bottom: 1px solid #f0f0f0; color: #000; font: 400 15px/22px "Noto Sans", "Noto Sans CJK SC", sans-serif; }
.menu-slot { position: relative; }
.menu-btn { height: 24px; padding: 0 6px; border: 1px solid transparent; }
.menu-btn.open { background: #cce8f6; border-color: #84c8f2; }
.menu { position: absolute; z-index: 5; background: #f1f1f1; border: 1px solid #ccc; box-shadow: 3px 3px 3px rgba(0, 0, 0, .45); color: #000; }
.effects { left: 0; top: 24px; width: 331px; height: 661px; padding: 2px; }
.distort { left: 324px; top: 132px; width: 212px; height: 894px; padding: 2px; }
.mi { display: flex; align-items: center; width: 100%; height: 24px; padding-left: 34px; }
.effects > .mi { padding-right: 4px; justify-content: space-between; }
.mi kbd { font: inherit; margin-right: 15px; }
.mi:disabled { color: #6d6d6d; }
.mi.on { background: #91c9f7; }
.sub-ar { color: #444; }
.effects hr { border: 0; border-top: 1px solid #d0d0d0; margin: 3px 0 3px 30px; }

.toolbar { display: flex; align-items: center; height: 31px; background: #232323; padding-left: 5px; gap: 4px; }
.grip { width: 3px; height: 20px; margin-right: 2px; background: repeating-linear-gradient(#444 0 1px, #232323 1px 3px); }
.tool { width: 28px; height: 27px; display: flex; align-items: center; justify-content: center; }
.tool.sel { background: #151515; border: 1px solid #101010; border-radius: 3px; }
.toolbar > .vsep { margin: 0 1px; }
.tools2 { display: flex; align-items: center; margin-left: 331px; gap: 12px; }
.snap { display: flex; align-items: center; gap: 5px; margin-right: 24px; margin-left: -1px; color: #8c8c8c; }
.snap span { padding-top: 2px; }
.snap input { appearance: none; width: 16px; height: 16px; border: 2px solid #909090; border-top-width: 3px; }
.spaces { margin-left: auto; width: 794px; height: 31px; border-left: 1px solid #1a1a1a; display: flex; align-items: center; padding-left: 28px; padding-right: 7px; }
.ws { color: #858585; margin-right: 55px; padding-top: 2px; }
.ws.blue { color: #2d8ceb; margin-right: 13px; }
.ws-menu { margin-right: 23px; }
.ws-more { margin-left: -3px; margin-right: 9px; }
.tall { height: 31px; width: 2px; margin-right: 6px; }
.field { display: flex; align-items: center; background: #161616; border: 1px solid #2c2c2c; border-radius: 3px; height: 25px; color: #b5b5b5; }
.field input { flex: 1; width: 0; }
.help { margin-left: auto; width: 243px; height: 24px; padding-left: 7px; gap: 12px; font-size: 16px; }
.help input { padding-top: 2px; }
.help input::placeholder { color: #c8c8c8; opacity: 1; }

.work { flex: 1; display: flex; flex-direction: column; background: #161616; padding: 3px 0 0; min-height: 0; }
.upper { flex: 1; display: flex; min-height: 0; gap: 6px; padding-left: 2px; margin-bottom: 6px; }
.panel { background: #232323; display: flex; flex-direction: column; min-width: 0; overflow: hidden; }
.project { width: 431px; flex: none; }
.viewer { flex: 1; }
.tabs { display: flex; align-items: center; height: 33px; padding-left: 13px; }
.tab { display: flex; align-items: center; gap: 8px; color: #858585; white-space: nowrap; padding-top: 2px; }
.tab.cur { color: #c8c8c8; border-bottom: 2px solid #b0b0b0; height: 32px; width: 59px; }
.tab svg { color: #999; }
.chip { width: 13px; height: 13px; flex: none; }
.red { background: #b53636; margin: 0 12px 0 45px; }
.tan { background: #a99373; }
.yellow { background: #f0d040; }
.info { display: flex; gap: 6px; padding: 9px 7px 0; height: 140px; }
.thumb { width: 142px; height: 82px; background: #000; border: 1px solid #111; flex: none; }
.nm { display: flex; align-items: center; gap: 6px; color: #d8d8d8; font-weight: 500; font-size: 15px; height: 16px; white-space: pre; }
.meta { font: 400 12px/17px "Noto Sans", sans-serif; color: #9b9b9b; white-space: nowrap; }
.find { margin: 1px 7px 0; padding-left: 7px; flex: none; }
.items { width: 100%; border-collapse: collapse; margin-top: 7px; font-size: 14px; color: #8d8d8d; table-layout: fixed; }
.items tr { height: 23px; }
.items th, .items td { padding: 0; text-align: left; font-weight: 300; }
.items th { height: 25px; background: #323232; border-top: 2px solid #101010; border-bottom: 2px solid #101010; color: #a5a5a5; font-size: 16px; }
.items .c1 { width: 147px; }
.items .c2 { width: 33px; padding-left: 6px; }
.items th.c1 span { display: inline-block; margin-left: 27px; width: 98px; }
.items th.c1 svg { display: inline-block; vertical-align: -1px; }
.items td.c1 { display: flex; align-items: center; height: 23px; color: #c8c8c8; }
.tw { width: 16px; margin-right: 4px; color: #888; }
.kind { margin-right: 1px; color: #aaa; }
.lbl { flex: 1; padding-left: 2px; line-height: 22px; }
.hot { background: #9f9f9f; color: #111; font-weight: 500; }
.items .hot { margin-right: 2px; font-size: 15px; }
.items tr.on { background: #353535; }
.sw { display: block; width: 13px; height: 13px; border: 1px solid #111; }
.foot { margin-top: auto; border-top: 2px solid #0c0c0c; display: flex; align-items: center; flex: none; }
.pfoot { height: 24px; }
.pfoot > span { width: 31px; display: flex; justify-content: center; }
.bpc { width: 64px; height: 22px; margin-right: 7px; border: 1px solid #2f2f2f; background: #1f1f1f; border-radius: 3px; font: 400 12px/22px "Open Sans", sans-serif; text-align: center; color: #8c8c8c; }
.hscroll { flex: 1; height: 18px; margin-left: 6px; border-radius: 9px; background: #3a3a3a; }

.vtab { height: 67px; padding: 9px 0 0 118px; display: flex; gap: 6px; border-bottom: 1px solid #0c0c0c; flex: none; }
.stage { flex: 1; display: grid; place-items: center; }
.canvas { width: 480px; height: 270px; background: #2e2e2e; display: grid; grid-template-columns: repeat(3, 1fr); align-content: space-between; justify-items: center; }
.canvas i { display: flex; justify-content: center; align-items: center; width: 9px; height: 9px; }
.canvas i:nth-child(3n+1) { justify-self: start; margin-left: -4px; }
.canvas i:nth-child(3n) { justify-self: end; margin-right: -5px; }
.canvas i:nth-child(-n+3) { margin-top: -4px; }
.canvas i:nth-child(n+7) { margin-bottom: -5px; }
.hd { background: #b53636; box-shadow: 1px 1px 0 #111; }
.vfoot { height: 29px; padding-left: 348px; gap: 9px; }
.pick { display: flex; align-items: center; height: 23px; background: #1d1d1d; border: 1px solid #2c2c2c; border-radius: 3px; padding: 0 4px 0 9px; margin-right: -3px; }
.pick select { appearance: none; flex: 1; width: 0; }
.w1 { width: 108px; margin-left: -4px; margin-right: -3px; }
.w2 { width: 131px; margin-left: -4px; }
.w3 { width: 86px; margin-left: -2px; margin-right: -4px; }
.pressed { background: #141414; width: 28px; height: 23px; display: flex; justify-content: center; align-items: center; margin: 0 -4px 0 -6px; }
.vfoot > .vsep { margin: 0 -3px 0 -4px; }
.exp { font: 400 14px/20px "Open Sans", sans-serif; margin-left: -2px; }

.side { width: 275px; flex: none; display: flex; }
.stack { flex: 1; display: flex; flex-direction: column; min-width: 0; }
.side h2 { background: #232323; height: 35px; margin-bottom: 3px; padding-left: 15px; font-weight: 300; font-size: 17px; line-height: 36px; color: #858585; flex: none; }
.side h2.lit { color: #b5b5b5; display: flex; justify-content: space-between; padding-right: 8px; align-items: center; margin: 0; height: 38px; }
.fx { flex: 1; background: #232323; overflow: hidden; }
.fxfind { margin: 0 5px 0 8px; padding-left: 7px; }
.fx ul { margin-top: 1px; border-top: 3px solid #0c0c0c; font: 300 14px/20px "Noto Sans Mono CJK SC", "Liberation Mono", "Noto Sans CJK SC", monospace; color: #c4c4c4; }
.fx li { display: flex; align-items: center; height: 21px; padding-left: 5px; gap: 1px; border-bottom: 1px solid #1d1d1d; background: #262626; white-space: pre; }
.fx li:nth-child(4n) { height: 22px; }
.fx li svg { color: #999; }
.vscroll { width: 16px; padding: 0 3px 0 2px; background: #1a1a1a; }
.vscroll i { display: block; height: 371px; border-radius: 6px; background: #303030; }

.timeline { height: 337px; flex: none; border: 1px solid #2d8ceb; margin: 0 1px; background: #232323; display: flex; flex-direction: column; }
.ttab { height: 34px; padding-left: 12px; display: flex; align-items: center; flex: none; color: #b8b8b8; }
.ttab button { color: #999; width: 18px; }
.ttab .chip { margin-right: 14px; }
.ttab svg { margin-left: 9px; color: #999; }
.tbody { flex: 1; display: flex; min-height: 0; }
.tleft { width: 676px; flex: none; }
.tctl { height: 45px; border-bottom: 2px solid #0c0c0c; display: flex; align-items: center; padding-left: 12px; color: #b0b0b0; }
.tc { width: 140px; height: 42px; display: flex; flex-direction: column; color: #2d8ceb; }
.tc b { font: 700 19px/24px "Open Sans", sans-serif; padding-left: 16px; }
.tc small { font: 300 14px/17px "Noto Sans Mono CJK SC", "Liberation Mono", monospace; color: #1a5fa8; white-space: nowrap; }
.tfind { width: 262px; padding-left: 7px; margin-right: 20px; }
.tctl > svg + svg { margin-left: 19px; }
.tctl > svg:last-child { margin-left: 12px; }
.thead, .layer { display: flex; align-items: center; height: 24px; }
.thead { background: #323232; border-bottom: 2px solid #0c0c0c; height: 25px; }
.layer { background: #464646; height: 24px; border-bottom: 1px solid #333; }
.av { display: flex; width: 87px; padding-left: 6px; gap: 2px; }
.thead .av { border-right: 1px solid #151515; height: 16px; gap: 3px; }
.lab { display: flex; width: 40px; align-items: center; padding-left: 15px; }
.thead .lab { border-right: 1px solid #151515; height: 16px; }
.no { width: 40px; padding-left: 5px; font-size: 16px; line-height: 16px; }
.thead .no { border-right: 1px solid #151515; font-size: 14px; }
.src { width: 164px; display: flex; padding-left: 6px; font-size: 16px; }
.thead .src { border-right: 1px solid #222; line-height: 18px; }
.sws { width: 167px; display: flex; align-items: center; padding-left: 4px; gap: 3px; }
.thead .sws { border-right: 1px solid #151515; padding-left: 3px; }
.sws em { font: italic 400 16px/16px "Liberation Serif", serif; width: 16px; }
.par { display: flex; align-items: center; padding-left: 7px; flex: 1; font-size: 16px; }
.av i { width: 16px; height: 18px; }
.sws i { width: 16px; height: 18px; display: flex; align-items: center; }
i.cell { background: #333; }
.layer .lab { padding-left: 2px; gap: 3px; }
.col { width: 20px; height: 20px; background: #b53636; }
.layer .src { padding-left: 2px; padding-right: 2px; }
.solid { width: 21px; height: 21px; background: #2e2e2e; border: 1px solid #111; margin-right: 3px; }
.src .hot { flex: 1; font-size: 15px; line-height: 22px; padding-left: 3px; white-space: nowrap; }
.none { background: #1a1a1a; color: #c8c8c8; margin-left: 5px; padding-left: 8px; line-height: 23px; flex: 1; }
.tright { flex: 1; display: flex; flex-direction: column; padding-top: 6px; border-right: 1px solid #161616; }
.nav { height: 13px; border: 1px solid #161616; border-width: 1px 0; background: #666; display: flex; justify-content: flex-end; }
.nav i, .area i { width: 10px; background: #2d8ceb; border-left: 2px solid #161616; border-radius: 0 6px 6px 0; }
.ruler { display: flex; height: 25px; margin-right: 10px; border-bottom: 2px solid #050505; font: 300 14px/18px "Noto Sans Mono CJK SC", "Liberation Mono", monospace; color: #a8a8a8; flex: none; }
.ruler span { flex: 1; min-width: 0; background: linear-gradient(#777, #777) 0 100% / 1px 6px no-repeat; }
.ruler span:last-child { flex: 0 0 1px; margin-right: -1px; }
.ruler b { display: inline-block; margin-left: -11px; font-weight: 300; }
.area { height: 18px; background: #5f5f5f; display: flex; justify-content: flex-end; flex: none; }
.cache { height: 6px; border: 2px solid #0d0d0d; border-bottom: 1px solid #111; border-left: 0; border-right: 0; background: #10b41c; margin-right: 10px; flex: none; }
.lrow { height: 24px; background: #464646; border-bottom: 1px solid #5a5a5a; flex: none; }
.bar { height: 22px; margin-top: 1px; margin-right: 10px; background: linear-gradient(#ad4a4a, #8f4141); border-top: 2px solid #a07070; }
.rest { flex: 1; margin-right: 10px; background: #303030; }
.tend { width: 20px; padding: 45px 0 0 1px; display: flex; flex-direction: column; gap: 8px; color: #b0b0b0; }
.tfoot { height: 24px; border-top: 2px solid #101010; display: flex; align-items: center; padding-left: 8px; gap: 7px; flex: none; }
.toggle { width: 169px; height: 20px; margin-left: 253px; border: 1px solid #2c2c2c; border-radius: 3px; background: #1f1f1f; text-align: center; color: #858585; font-size: 16px; line-height: 18px; }
.zoomtri { margin-left: 274px; }

.taskbar { height: 50px; flex: none; display: flex; background: linear-gradient(90deg, #e0e9f1 0, #e5e6ea 150px, #efe3dc 320px, #f0e4dd 820px, #e0d6d3 960px, #dedee3 1180px, #dfe0e6 1600px, #e5dbda 1780px, #e3d6d3 100%); color: #222; }
.start { width: 60px; display: flex; align-items: center; justify-content: center; }
.app { width: 62px; display: flex; align-items: center; justify-content: center; position: relative; flex: none; }
.first { margin-right: 8px; }
.run { background: linear-gradient(#0078d7, #0078d7) 50% 100% / 52px 3px no-repeat; }
.multi { background: linear-gradient(90deg, #0078d7 80%, #64a8e4 80%) 50% 100% / 52px 3px no-repeat; }
.active { background: linear-gradient(#0078d7, #0078d7) 50% 100% / 62px 3px no-repeat, #f7f3ef; }
.off { position: absolute; left: 18px; top: 16px; width: 14px; text-align: center; color: #fff; font: 700 13px/18px "Open Sans", sans-serif; }
.apps2 { display: flex; margin-left: 186px; }
.adobe { width: 29px; height: 28px; border: 2px solid; font: 700 16px/22px "Open Sans", sans-serif; text-align: center; border-bottom-width: 3px; }
.ps { background: #001d34; color: #31a8ff; }
.pr { background: #2a0634; color: #d765f3; }
.ae { background: #1a0340; color: #b884f5; }
.tray { margin-left: auto; display: flex; align-items: center; gap: 11px; padding-right: 30px; }
.clock { display: flex; flex-direction: column; font: 400 15px/20px "Open Sans", "Noto Sans CJK SC", sans-serif; width: 74px; margin: 0 13px 0 46px; white-space: nowrap; }
.news { position: relative; margin-right: 10px; }
.news b { position: absolute; right: 5px; bottom: 2px; color: #fff; font: 700 12px/14px "Open Sans", sans-serif; }
.mark { position: absolute; right: 6px; bottom: 5px; display: flex; gap: 10px; align-items: flex-start; z-index: 6; }
.mark div { display: flex; flex-direction: column; width: 186px; }
.mark strong { font: italic 500 36px/40px "Noto Sans CJK SC", sans-serif; color: #00bff3; white-space: nowrap; }
.mark span { font: 400 20px/20px "DejaVu Sans", sans-serif; color: #fa7d4b; padding-left: 11px; }
</style>
